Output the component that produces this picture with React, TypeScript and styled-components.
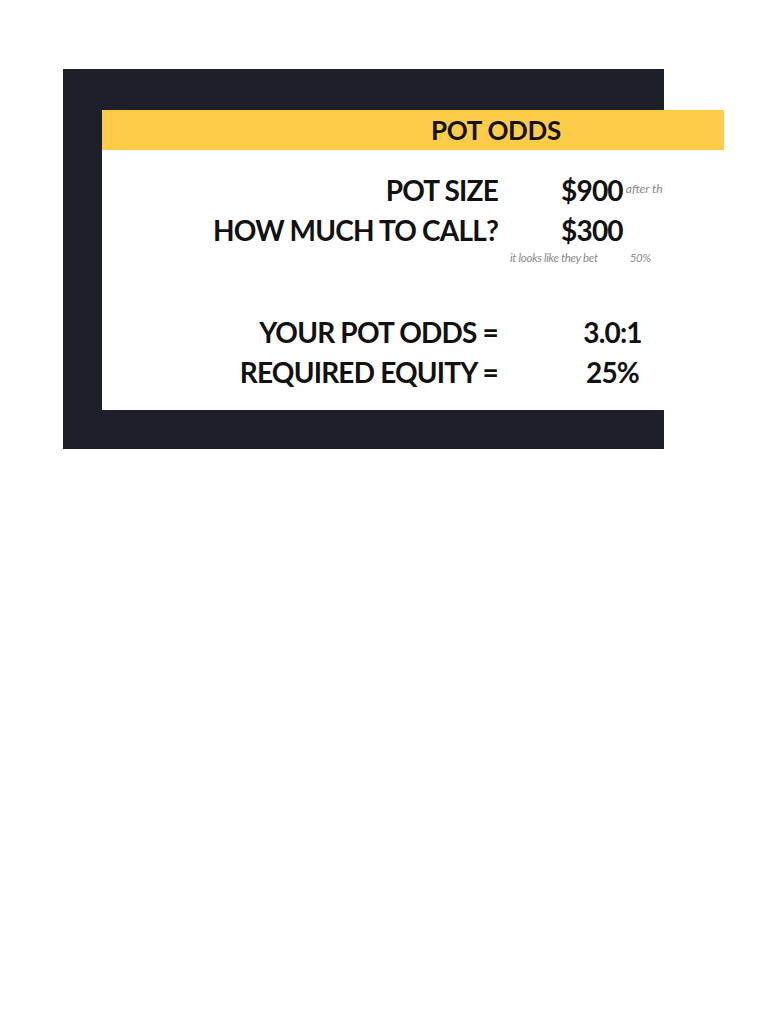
import * as React from "react";
import styled, { createGlobalStyle } from "styled-components";

const GlobalStyle = createGlobalStyle`
  body {
    margin: 0;
    background: #ffffff;
    font-family: Lato, "Open Sans", sans-serif;
  }
`;

const Page = styled.div`
  padding: 69px 0 0 63px;
`;

const Frame = styled.div`
  width: 562px;
  padding: 41px 0 39px 39px;
  background-color: #1d2029;
`;

const TitleBar = styled.div`
  width: 622px;
  height: 40px;
  background-color: #ffcc4a;
  display: flex;
  align-items: center;
  padding-left: 329px;
  box-sizing: border-box;
  font-size: 26px;
  font-weight: 700;
  letter-spacing: -0.3px;
  color: #111;
`;

const Sheet = styled.div`
  height: 260px;
  background: #ffffff;
  padding-top: 20px;
  box-sizing: border-box;
`;

const Row = styled.div`
  display: grid;
  grid-template-columns: 396px 63px 103px;
  height: 40px;
  align-items: center;
  font-size: 28px;
  font-weight: 700;
  letter-spacing: -0.8px;
  color: #111;
  white-space: nowrap;
`;

const Label = styled.div`
  text-align: right;
`;

const Value = styled.div<{ $center?: boolean }>`
  display: flex;
  align-items: baseline;
  justify-content: ${(p) => (p.$center ? "center" : "flex-start")};
`;

const Aside = styled.span`
  font-size: 12px;
  font-weight: 400;
  font-style: italic;
  letter-spacing: 0;
  color: #8a8a8a;
  margin-left: 3px;
  position: relative;
  top: -8px;
`;

const NoteRow = styled.div`
  display: flex;
  height: 14px;
  align-items: center;
  padding-left: 408px;
  font-size: 11.5px;
  font-style: italic;
  letter-spacing: -0.3px;
  color: #8a8a8a;
  white-space: nowrap;
`;

const NotePct = styled.span`
  margin-left: 32px;
`;

const Spacer = styled.div`
  height: 48px;
`;

export default function App() {
  return (
    <Page>
      <GlobalStyle />
      <Frame>
        <TitleBar>POT ODDS</TitleBar>
        <Sheet>
          <Row>
            <Label>POT SIZE</Label>
            <div />
            <Value>
              $900<Aside>after th</Aside>
            </Value>
          </Row>
          <Row>
            <Label>HOW MUCH TO CALL?</Label>
            <div />
            <Value>$300</Value>
          </Row>
          <NoteRow>
            it looks like they bet<NotePct>50%</NotePct>
          </NoteRow>
          <Spacer />
          <Row>
            <Label>YOUR POT ODDS =</Label>
            <div />
            <Value $center>3.0:1</Value>
          </Row>
          <Row>
            <Label>REQUIRED EQUITY =</Label>
            <div />
            <Value $center>25%</Value>
          </Row>
        </Sheet>
      </Frame>
    </Page>
  );
}
